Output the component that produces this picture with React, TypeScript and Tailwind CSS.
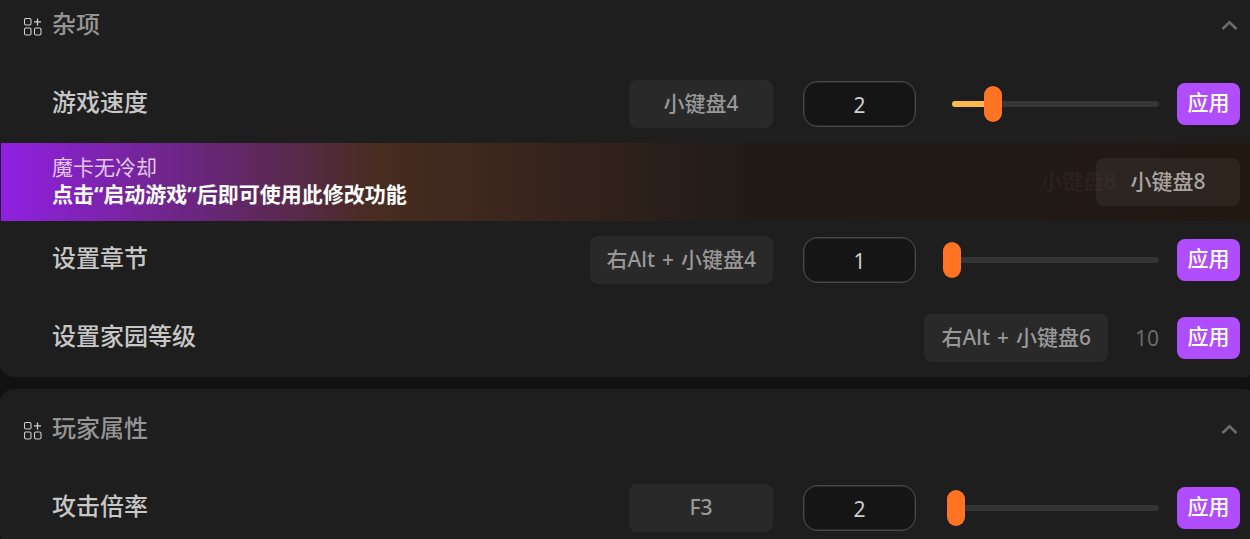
import { useState } from 'react';

const LABEL = 'flex-1 pb-1 text-2xl leading-9 font-medium text-[#c7c7c7]';

function GroupIcon() {
  return (
    <svg className="mt-0.5" width="18" height="18" viewBox="0 0 18 18" fill="none" stroke="#cfcfcf" strokeWidth="1.1" aria-hidden="true">
      <rect x="0.5" y="0.5" width="6.5" height="6.5" rx="1.5" />
      <rect x="0.5" y="10" width="6.5" height="7" rx="1.5" />
      <rect x="10.5" y="10" width="6.5" height="7" rx="1.5" />
      <path d="M13.5 0.5v7M10 3.8h7" strokeWidth="1.3" />
    </svg>
  );
}

function Chevron() {
  return (
    <svg width="18" height="12" viewBox="0 0 18 12" fill="none" stroke="#6c6c6c" strokeWidth="2.6" aria-hidden="true">
      <path d="M2.5 9 9.5 2.2 16.5 9" />
    </svg>
  );
}

function SectionHeader({ title }: { title: string }) {
  return (
    <header className="mb-[13px] flex h-[52px] items-center pr-3 pl-6">
      <GroupIcon />
      <h2 className="ml-2.5 flex-1 pb-1 text-2xl leading-9 font-medium text-[#959595]">{title}</h2>
      <button type="button" aria-label={title}>
        <Chevron />
      </button>
    </header>
  );
}

function HotKey({ keys, dim = false }: { keys: string[]; dim?: boolean }) {
  return (
    <button
      type="button"
      className={
        dim
          ? 'relative flex h-12 min-w-36 items-center justify-center rounded-lg bg-white/5 px-[17px] pb-0.5 text-[21px] leading-8 font-medium text-[#a8a4a1]'
          : 'flex h-12 min-w-36 items-center justify-center gap-[7px] rounded-lg bg-[#292929] px-[17px] pb-0.5 text-[21px] leading-8 font-medium text-[#989898]'
      }
    >
      {keys.map((key, i) => (
        <span key={key} className="flex gap-[7px]">
          {i > 0 && <span>+</span>}
          <span>{key}</span>
        </span>
      ))}
    </button>
  );
}

function ApplyButton() {
  return (
    <button type="button" className="ml-[18px] h-[42px] w-[63px] rounded-lg bg-[#b04dff] pb-1 text-[21px] leading-8 font-medium text-white">
      应用
    </button>
  );
}

type SliderRowProps = { label: string; keys: string[]; initial: number; min: number; max: number };

function SliderRow({ label, keys, initial, min, max }: SliderRowProps) {
  const [value, setValue] = useState(initial);
  const percent = ((value - min) / (max - min)) * 100;
  return (
    <div className="flex h-[78px] items-center pr-2.5 pl-[52px]">
      <label htmlFor={label} className={LABEL}>
        {label}
      </label>
      <HotKey keys={keys} />
      <input
        id={label}
        type="text"
        value={value}
        onChange={(e) => setValue(Math.min(max, Math.max(min, Number(e.target.value) || min)))}
        className="ml-[30px] h-[46px] w-[113px] rounded-[14px] border border-[#484848] bg-[#151515] pt-0.5 text-center text-[21px] text-[#cfcfcf] shadow-[inset_0_0_0_1px_#2a2a2a] outline-none"
      />
      <div className="ml-9 grid w-[207px] items-center">
        <div className="col-start-1 row-start-1 h-1.5 overflow-hidden rounded-full bg-[#353535]">
          <div className="h-full bg-[#ffb84d]" style={{ width: `${percent}%` }} />
        </div>
        <input
          type="range"
          aria-label={label}
          min={min}
          max={max}
          value={value}
          onChange={(e) => setValue(Number(e.target.value))}
          className="z-10 col-start-1 row-start-1 -mx-[9px] h-9 appearance-none bg-transparent [&::-webkit-slider-thumb]:h-9 [&::-webkit-slider-thumb]:w-[18px] [&::-webkit-slider-thumb]:appearance-none [&::-webkit-slider-thumb]:rounded-full [&::-webkit-slider-thumb]:bg-[#ff7322]"
        />
      </div>
      <ApplyButton />
    </div>
  );
}

export default function App() {
  return (
    <main className="flex h-screen flex-col gap-3 overflow-hidden bg-[#111111] font-['Noto_Sans','Noto_Sans_CJK_SC',sans-serif]">
      <section className="shrink-0 rounded-br-sm rounded-bl-[14px] bg-[#1e1e1e]">
        <SectionHeader title="杂项" />
        <SliderRow label="游戏速度" keys={['小键盘4']} initial={2} min={0} max={10} />
        <div className="ml-px flex h-[78px] items-center bg-[linear-gradient(90deg,#9020e3_0%,#482c20_30%,#211b18_60%,#221812_100%)] pr-2.5 pl-[51px]">
          <div className="flex-1 pb-0.5 text-[21px] leading-[27px]">
            <p className="text-[#e0c8f0]">魔卡无冷却</p>
            <p className="font-bold text-white">点击“启动游戏”后即可使用此修改功能</p>
          </div>
          <span aria-hidden="true" className="-mr-5 pb-0.5 text-[21px] leading-8 font-medium text-[#2b211d]">
            小键盘8
          </span>
          <HotKey dim keys={['小键盘8']} />
        </div>
        <SliderRow label="设置章节" keys={['右Alt', '小键盘4']} initial={1} min={1} max={10} />
        <div className="flex h-[78px] items-center pr-2.5 pl-[52px]">
          <span className={LABEL}>设置家园等级</span>
          <HotKey keys={['右Alt', '小键盘6']} />
          <span className="ml-[27px] text-[21px] leading-8 text-[#6b6b6b]">10</span>
          <ApplyButton />
        </div>
      </section>
      <section className="shrink-0 rounded-l-[14px] rounded-r-sm bg-[#1e1e1e] pt-[15px]">
        <SectionHeader title="玩家属性" />
        <SliderRow label="攻击倍率" keys={['F3']} initial={2} min={0} max={100} />
      </section>
    </main>
  );
}
